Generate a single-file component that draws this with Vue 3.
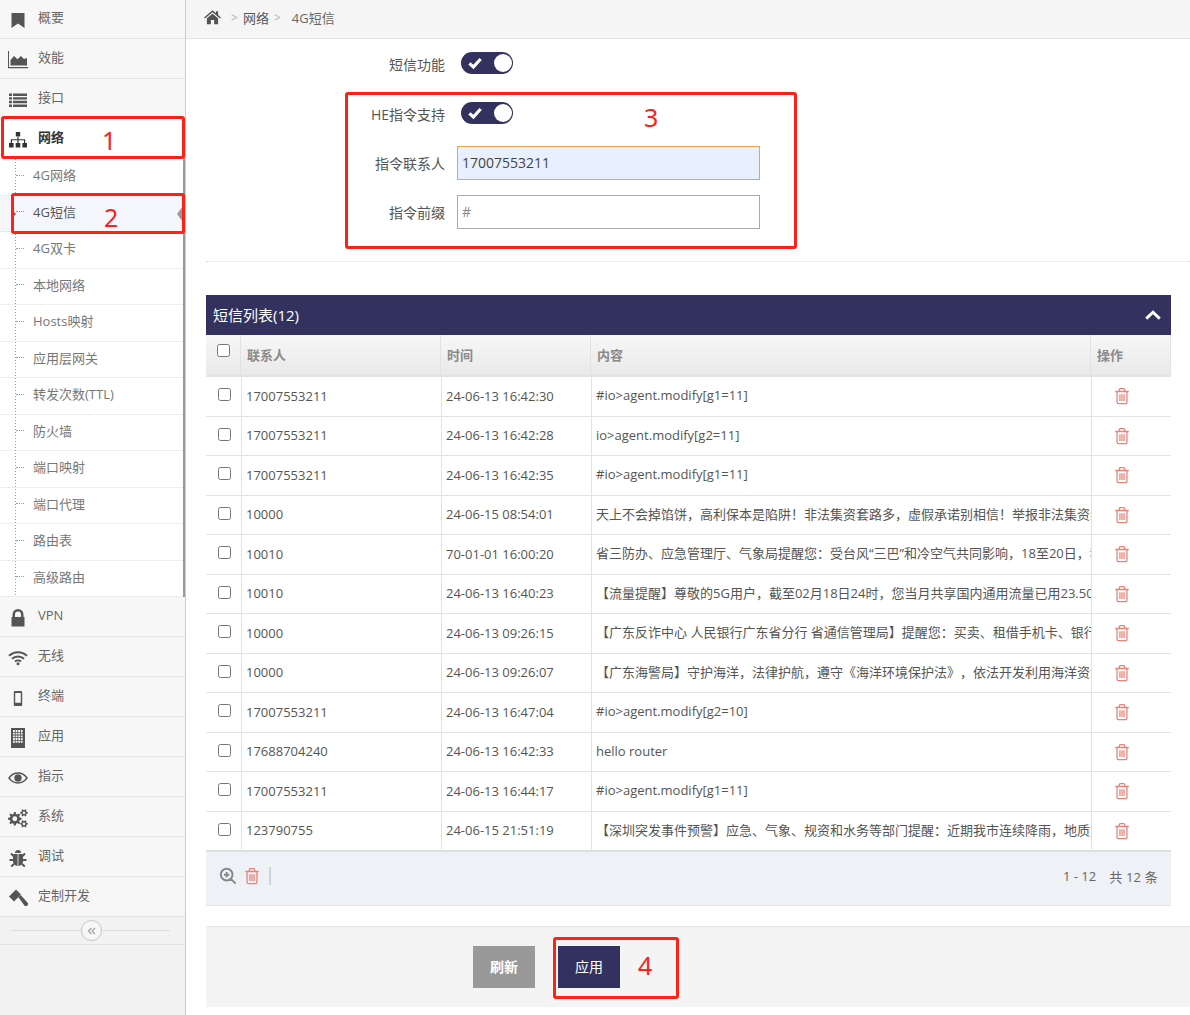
<script setup>
function gear(cx, cy, r, n) {
  const pts = []
  const inner = r * 0.74
  for (let i = 0; i < n; i++) {
    const a = (i / n) * Math.PI * 2
    const w = Math.PI / n / 2
    for (const [rad, off] of [[inner, -w * 1.25], [r, -w * 0.7], [r, w * 0.7], [inner, w * 1.25]]) {
      pts.push((cx + rad * Math.cos(a + off)).toFixed(2) + ' ' + (cy + rad * Math.sin(a + off)).toFixed(2))
    }
  }
  const h = r * 0.36
  return `M${pts.join('L')}Z M${cx - h} ${cy}a${h} ${h} 0 1 0 ${2 * h} 0a${h} ${h} 0 1 0 ${-2 * h} 0Z`
}

function building() {
  let d = 'M3 0h14v20H3z'
  for (let r = 0; r < 5; r++) {
    for (let c = 0; c < 4; c++) {
      d += ` M${5 + c * 2.6} ${2 + r * 2.7}h1.8v1.9h-1.8z`
    }
  }
  return d
}

const icons = {
  bookmark: { f: 'M3.5 3h13v15l-6.5-4.5L3.5 18z' },
  area: { f: 'M0 1h1v16h19v1.2H0zM2.5 15.5V10L6 6l3.5 3.2L13 6l3 3 3-1v7.5z' },
  list: { f: 'M1 3.5h3V6H1zM5 3.5h14V6H5zM1 7.2h3v2.4H1zM5 7.2h14v2.4H5zM1 10.8h3v2.4H1zM5 10.8h14v2.4H5zM1 14.4h3v2.6H1zM5 14.4h14V17H5z' },
  sitemap: { f: 'M7.8 2h4.4v4.4H7.8zM1 13h4.6v4.6H1zM7.7 13h4.6v4.6H7.7zM14.4 13H19v4.6h-4.6zM9.4 6h1.2v3.2h6.6V13H16v-2.7h-5.4V13H9.4v-2.7H4V13H2.8V9.2h6.6z' },
  lock: { f: 'M4.5 9V6.5a5.5 5.5 0 0 1 11 0V9h1v9.5h-13V9zM7 9h6V6.5a3 3 0 0 0-6 0z' },
  wifi: { f: 'M8.5 15.8a1.5 1.5 0 1 0 3 0a1.5 1.5 0 1 0-3 0z', s: 'M1 7.8a13 13 0 0 1 18 0M4 10.8a8.8 8.8 0 0 1 12 0M7 13.6a4.4 4.4 0 0 1 6 0' },
  mobile: { f: 'M7 3h6a1.2 1.2 0 0 1 1.2 1.2v12.6A1.2 1.2 0 0 1 13 18H7a1.2 1.2 0 0 1-1.2-1.2V4.2A1.2 1.2 0 0 1 7 3zM7.2 5v9.8h5.6V5z' },
  building: { f: building() },
  eye: { f: 'M0 10C3 6 6 4.3 10 4.3S17 6 20 10c-3 4-6 5.7-10 5.7S3 14 0 10zM2 10c2.3 3 4.8 4.3 8 4.3S15.7 13 18 10c-2.3-3-4.8-4.3-8-4.3S4.3 7 2 10zM6.3 10a3.7 3.7 0 1 0 7.4 0a3.7 3.7 0 1 0-7.4 0z' },
  cogs: { f: gear(6.8, 10.8, 6.8, 8) + ' ' + gear(16, 4.8, 3.8, 6) + ' ' + gear(16, 15.8, 3.8, 6) },
  bug: { f: 'M7 5a3 3 0 0 1 6 0zM6 6h3.6v12C7 17.7 5 16 5 13.5V7zM10.4 6H14l1 1v6.5c0 2.5-2 4.2-4.6 4.5z', s: 'M5.5 8 3 5.5M14.5 8 17 5.5M5 12H1.5M15 12h3.5M6 16l-2.8 2.5M14 16l2.8 2.5' },
  gavel: { f: 'M1 8.5 8 1.5l5 5-7 7zM10.2 9l2.2-2.2 7 7.6a2.1 2.1 0 0 1-3 3z' },
  home: { f: 'M10 1.5 0 10l1.1 1.3L10 3.9l8.9 7.4L20 10l-3.4-2.9V2.6h-2.5v2.4zM10 5.5l6.6 5.5v7h-4.7v-5H8.1v5H3.4v-7z' },
  trash: { s: 'M4.5 5.5V17a1.5 1.5 0 0 0 1.5 1.5h8a1.5 1.5 0 0 0 1.5-1.5V5.5M2.5 5h15M7 5V3a1.2 1.2 0 0 1 1.2-1.2h3.6A1.2 1.2 0 0 1 13 3v2M7.7 8v7.5M10 8v7.5M12.3 8v7.5' },
  search: { s: 'M2 8.5a6.5 6.5 0 1 0 13 0a6.5 6.5 0 1 0-13 0M13.5 13.5 18.5 18.5M5.5 8.5h6M8.5 5.5v6' },
  up: { s: 'M2.5 14 10 7l7.5 7' },
  check: { s: 'M3 10.5 8 15l9-10' },
  angles: { s: 'M9 5 4 10l5 5M15 5l-5 5 5 5' }
}

const topNav = [
  { label: '概要', icon: 'bookmark' },
  { label: '效能', icon: 'area' },
  { label: '接口', icon: 'list' },
  { label: '网络', icon: 'sitemap', open: true }
]
const subNav = ['4G网络', '4G短信', '4G双卡', '本地网络', 'Hosts映射', '应用层网关', '转发次数(TTL)', '防火墙', '端口映射', '端口代理', '路由表', '高级路由']
const bottomNav = [
  { label: 'VPN', icon: 'lock' },
  { label: '无线', icon: 'wifi' },
  { label: '终端', icon: 'mobile' },
  { label: '应用', icon: 'building' },
  { label: '指示', icon: 'eye' },
  { label: '系统', icon: 'cogs' },
  { label: '调试', icon: 'bug' },
  { label: '定制开发', icon: 'gavel' }
]

const rows = [
  ['17007553211', '24-06-13 16:42:30', '#io>agent.modify[g1=11]'],
  ['17007553211', '24-06-13 16:42:28', 'io>agent.modify[g2=11]'],
  ['17007553211', '24-06-13 16:42:35', '#io>agent.modify[g1=11]'],
  ['10000', '24-06-15 08:54:01', '天上不会掉馅饼，高利保本是陷阱！非法集资套路多，虚假承诺别相信！举报非法集资线索'],
  ['10010', '70-01-01 16:00:20', '省三防办、应急管理厅、气象局提醒您：受台风“三巴”和冷空气共同影响，18至20日，我省'],
  ['10010', '24-06-13 16:40:23', '【流量提醒】尊敬的5G用户，截至02月18日24时，您当月共享国内通用流量已用23.50GB'],
  ['10000', '24-06-13 09:26:15', '【广东反诈中心 人民银行广东省分行 省通信管理局】提醒您：买卖、租借手机卡、银行卡'],
  ['10000', '24-06-13 09:26:07', '【广东海警局】守护海洋，法律护航，遵守《海洋环境保护法》，依法开发利用海洋资源'],
  ['17007553211', '24-06-13 16:47:04', '#io>agent.modify[g2=10]'],
  ['17688704240', '24-06-13 16:42:33', 'hello router'],
  ['17007553211', '24-06-13 16:44:17', '#io>agent.modify[g1=11]'],
  ['123790755', '24-06-15 21:51:19', '【深圳突发事件预警】应急、气象、规资和水务等部门提醒：近期我市连续降雨，地质灾害']
]
</script>

<template>
  <div class="page">
    <aside class="sidebar">
      <div class="nav-top">
        <div v-for="item in topNav" :key="item.label" class="nav-item" :class="{ open: item.open }">
          <span class="nav-icon">
            <svg viewBox="0 0 20 20" width="20" height="20"><path :d="icons[item.icon].f" fill-rule="evenodd" /></svg>
          </span>
          <span>{{ item.label }}</span>
        </div>
      </div>
      <div class="sub-list">
        <div v-for="sub in subNav" :key="sub" class="sub-item" :class="{ active: sub === '4G短信' }">
          <span class="tick"></span>
          <span>{{ sub }}</span>
        </div>
      </div>
      <div v-for="item in bottomNav" :key="item.label" class="nav-item">
        <span class="nav-icon">
          <svg viewBox="0 0 20 20" width="20" height="20">
            <path :d="icons[item.icon].f" fill-rule="evenodd" />
            <path v-if="icons[item.icon].s" :d="icons[item.icon].s" class="line" />
          </svg>
        </span>
        <span>{{ item.label }}</span>
      </div>
      <div class="collapse">
        <span class="collapse-btn">
          <svg viewBox="0 0 20 20" width="12" height="12"><path :d="icons.angles.s" class="angle" /></svg>
        </span>
      </div>
    </aside>

    <main class="main">
      <nav class="crumbs">
        <svg class="home" viewBox="0 0 20 20" width="17" height="17"><path :d="icons.home.f" fill-rule="evenodd" /></svg>
        <span class="sep">&gt;</span>
        <span>网络</span>
        <span class="sep tight">&gt;</span>
        <span class="current">4G短信</span>
      </nav>

      <form class="form" @submit.prevent>
        <div class="field first">
          <label class="low">短信功能</label>
          <span class="switch">
            <svg viewBox="0 0 20 20" width="16" height="16"><path :d="icons.check.s" class="tick-mark" /></svg>
            <span class="knob"></span>
          </span>
        </div>
        <div class="field second">
          <label class="low">HE指令支持</label>
          <span class="switch">
            <svg viewBox="0 0 20 20" width="16" height="16"><path :d="icons.check.s" class="tick-mark" /></svg>
            <span class="knob"></span>
          </span>
        </div>
        <div class="field third">
          <label>指令联系人</label>
          <input class="text filled" type="text" value="17007553211" />
        </div>
        <div class="field fourth">
          <label>指令前缀</label>
          <input class="text" type="text" placeholder="#" />
        </div>
      </form>

      <div class="dots"></div>

      <section class="panel">
        <header class="panel-title">
          <span class="title-text">短信列表(12)</span>
          <svg viewBox="0 0 20 20" width="18" height="18"><path :d="icons.up.s" class="chev" /></svg>
        </header>
        <div class="grid-row head">
          <div class="cell chk"><input type="checkbox" /></div>
          <div class="cell">联系人</div>
          <div class="cell">时间</div>
          <div class="cell">内容</div>
          <div class="cell">操作</div>
        </div>
        <div v-for="(row, i) in rows" :key="i" class="grid-row body">
          <div class="cell chk"><input type="checkbox" /></div>
          <div class="cell">{{ row[0] }}</div>
          <div class="cell">{{ row[1] }}</div>
          <div class="cell text-cell">{{ row[2] }}</div>
          <div class="cell op">
            <svg viewBox="0 0 20 20" width="18" height="18"><path :d="icons.trash.s" class="trash" /></svg>
          </div>
        </div>
        <footer class="panel-foot">
          <svg viewBox="0 0 20 20" width="18" height="18"><path :d="icons.search.s" class="search" /></svg>
          <svg class="foot-trash" viewBox="0 0 20 20" width="18" height="18"><path :d="icons.trash.s" class="trash" /></svg>
          <span class="divider"></span>
          <span class="pager">1 - 12</span>
          <span class="total">共 12 条</span>
        </footer>
      </section>

      <div class="actions">
        <button type="button" class="btn gray">刷新</button>
        <button type="button" class="btn navy">应用</button>
      </div>
    </main>

    <div class="mark" style="left:1px;top:116px;width:184px;height:43px"></div>
    <div class="mark" style="left:11px;top:193px;width:174px;height:41px"></div>
    <div class="mark" style="left:345px;top:92px;width:452px;height:157px"></div>
    <div class="mark" style="left:553px;top:937px;width:126px;height:62px"></div>
    <span class="num" style="left:102px;top:123px">1</span>
    <span class="num" style="left:104px;top:200px">2</span>
    <span class="num" style="left:644px;top:100px">3</span>
    <span class="num" style="left:638px;top:948px">4</span>
  </div>
</template>

<style scoped>
.page {
  position: relative;
  display: flex;
  width: 1190px;
  height: 1015px;
  overflow: hidden;
  background: #fff;
  font-family: "Open Sans", "Noto Sans CJK SC", sans-serif;
  font-size: 13px;
  color: #666;
  text-spacing-trim: space-all;
}

/* sidebar */
.sidebar {
  flex: none;
  width: 185px;
  border-right: 1px solid #ccc;
  background: #f2f2f2;
}
.nav-top {
  margin-top: -2px;
  padding-top: 1px;
  background: #f7f7f7;
}
.nav-item {
  box-sizing: border-box;
  display: flex;
  align-items: center;
  height: 40px;
  padding-bottom: 4px;
  border-bottom: 1px solid #e2e2e2;
  background: #f7f7f7;
  color: #666;
}
.nav-item.open {
  background: #fff;
  color: #333;
  font-weight: 700;
  border-right: 2px solid #999;
}
.nav-icon {
  display: flex;
  width: 20px;
  height: 20px;
  margin: 6px 10px 0 8px;
}
.nav-icon svg {
  fill: #555;
}
.nav-icon .line {
  fill: none;
  stroke: #555;
  stroke-width: 2;
}
.nav-item.open .nav-icon svg {
  fill: #333;
}
.sub-list {
  box-sizing: border-box;
  border-right: 2px solid #999;
  background: #fff linear-gradient(#6fa8d0 50%, transparent 50%) 15px 0 / 1px 3px repeat-y;
}
.sub-item {
  position: relative;
  box-sizing: border-box;
  display: flex;
  align-items: center;
  height: 36.5px;
  padding-bottom: 4px;
  border-bottom: 1px dotted #ddd;
  color: #777;
}
.tick {
  width: 8px;
  margin: 1px 9px 0 16px;
  border-top: 1px dotted #6fa8d0;
}
.sub-item.active {
  background: #f5f6fb;
  color: #555;
}
.sub-item.active::before {
  content: "";
  position: absolute;
  left: 12px;
  top: 14px;
  border: 4px solid transparent;
  border-left-color: #a8485c;
}
.sub-item.active::after {
  content: "";
  position: absolute;
  right: 0;
  top: 10px;
  border: 8px solid transparent;
  border-left: 0;
  border-right: 6px solid #999;
}
.collapse {
  display: flex;
  align-items: center;
  height: 27px;
  padding-left: 81px;
  border-bottom: 1px solid #e2e2e2;
  background: linear-gradient(#ddd, #ddd) 11px center / 159px 1px no-repeat;
}
.collapse-btn {
  box-sizing: border-box;
  display: flex;
  align-items: center;
  justify-content: center;
  width: 21px;
  height: 21px;
  border: 1px solid #c4c4c4;
  border-radius: 50%;
  background: #f7f7f7;
}
.angle {
  fill: none;
  stroke: #999;
  stroke-width: 1.8;
}

/* main */
.main {
  flex: 1;
  min-width: 0;
}
.crumbs {
  box-sizing: border-box;
  display: flex;
  align-items: center;
  height: 39px;
  padding: 0 0 3px 18px;
  border-bottom: 1px solid #e5e5e5;
  background: #f5f5f5;
  color: #555;
}
.home {
  margin-top: -1px;
  fill: #555;
}
.sep {
  margin: 0 5px 0 10px;
  color: #aab4c0;
  font-size: 12px;
}
.sep.tight {
  margin: 0 11px 0 5px;
}
.current {
  color: #666;
}

.form {
  display: flex;
  flex-direction: column;
}
.field {
  display: flex;
  align-items: center;
}
.field label {
  width: 259px;
  text-align: right;
  color: #555;
  font-size: 14px;
}
.field label.low {
  padding-top: 2px;
}
.field.first { margin-top: 13px; }
.field.second { margin-top: 28px; }
.field.third { margin-top: 22px; }
.field.fourth { margin-top: 15px; }
.switch {
  position: relative;
  box-sizing: border-box;
  display: flex;
  align-items: center;
  width: 52px;
  height: 22px;
  margin-left: 16px;
  padding-left: 6px;
  border-radius: 11px;
  background: #33325f;
}
.knob {
  position: absolute;
  right: 1px;
  top: 2px;
  width: 18px;
  height: 18px;
  border-radius: 50%;
  background: #fff;
}
.tick-mark {
  fill: none;
  stroke: #fff;
  stroke-width: 4;
}
.text {
  box-sizing: border-box;
  width: 303px;
  height: 34px;
  margin-left: 12px;
  padding: 0 4px 2px;
  border: 1px solid #aaa;
  border-radius: 0;
  outline: none;
  font: 14px "Open Sans", "Noto Sans CJK SC", sans-serif;
  color: #444;
}
.text::placeholder {
  color: #888;
}
.text.filled {
  border-color: #f0a24c;
  background: #e8f0fd;
}
.dots {
  margin: 32px 0 33px 20px;
  border-top: 1px dotted #ddd;
}

/* panel */
.panel {
  margin: 0 19px 0 20px;
}
.panel-title {
  box-sizing: border-box;
  display: flex;
  align-items: center;
  justify-content: space-between;
  height: 40px;
  padding: 0 9px 0 7px;
  background: #33325f;
  color: #fff;
  font-size: 15px;
}
.title-text {
  margin-bottom: 2px;
}
.chev {
  fill: none;
  stroke: #fff;
  stroke-width: 3.2;
}
.grid-row {
  box-sizing: border-box;
  display: grid;
}
.grid-row.head {
  grid-template-columns: 35px 200px 150px 500px 80px;
  height: 42px;
  border-bottom: 2px solid #e2e2e2;
  background: linear-gradient(#f7f7f7, #e9e9e9);
  color: #8a8a8a;
  font-weight: 600;
}
.grid-row.body {
  grid-template-columns: 36px 200px 150px 500px 79px;
  height: 39.5px;
  border-bottom: 1px solid #e2e2e2;
  color: #555;
}
.cell {
  display: flex;
  align-items: center;
  min-width: 0;
  padding: 0 0 1px 4px;
  white-space: nowrap;
  overflow: hidden;
}
.head .cell {
  padding: 0 0 2px 6px;
  border-right: 1px solid #e2e2e2;
}
.body .cell {
  border-right: 1px solid #e2e2e2;
}
.body .cell:last-child {
  border-right: 0;
}
.body .chk {
  padding: 0 0 0 12px;
}
.head .chk {
  padding: 0 0 10px 11px;
}
.chk input {
  margin: 0;
}
.body .chk input {
  margin-bottom: 3px;
}
.text-cell {
  display: block;
  line-height: 37px;
  padding-bottom: 0;
}
.op {
  padding: 0 0 0 21px;
}
.trash {
  fill: none;
  stroke: #ea8275;
  stroke-width: 1.4;
}
.panel-foot {
  box-sizing: border-box;
  display: flex;
  align-items: center;
  height: 56px;
  margin-top: -1px;
  padding: 0 13px 5px 13px;
  border-top: 2px solid #dfdfdf;
  border-bottom: 1px solid #e2e2e2;
  background: #eef1f6;
  color: #666;
}
.search {
  fill: none;
  stroke: #888;
  stroke-width: 2.2;
}
.foot-trash {
  margin-left: 6px;
}
.divider {
  width: 2px;
  height: 18px;
  margin-left: 8px;
  background: #cbd4dc;
}
.pager {
  margin-left: auto;
}
.total {
  margin-left: 13px;
  letter-spacing: 0.2px;
}
.actions {
  box-sizing: border-box;
  display: flex;
  gap: 23px;
  height: 81px;
  margin-top: 20px;
  margin-left: 20px;
  padding: 19px 0 0 267px;
  border-top: 1px solid #e5e5e5;
  background: #f4f4f4;
}
.btn {
  width: 62px;
  height: 42px;
  padding: 0 0 2px;
  border: 0;
  color: #fff;
  font: 14px "Open Sans", "Noto Sans CJK SC", sans-serif;
}
.btn.gray {
  background: #999;
  font-weight: 600;
}
.btn.navy {
  background: #33325f;
}

/* annotations drawn over the screenshot */
.mark {
  position: absolute;
  box-sizing: border-box;
  border: 3px solid #ff2016;
  border-radius: 3px;
  pointer-events: none;
}
.num {
  position: absolute;
  color: #ff2016;
  font-family: "Noto Sans", sans-serif;
  font-size: 25px;
  line-height: 34px;
}
</style>

<style>
html, body {
  margin: 0;
  overflow: hidden;
}
</style>
